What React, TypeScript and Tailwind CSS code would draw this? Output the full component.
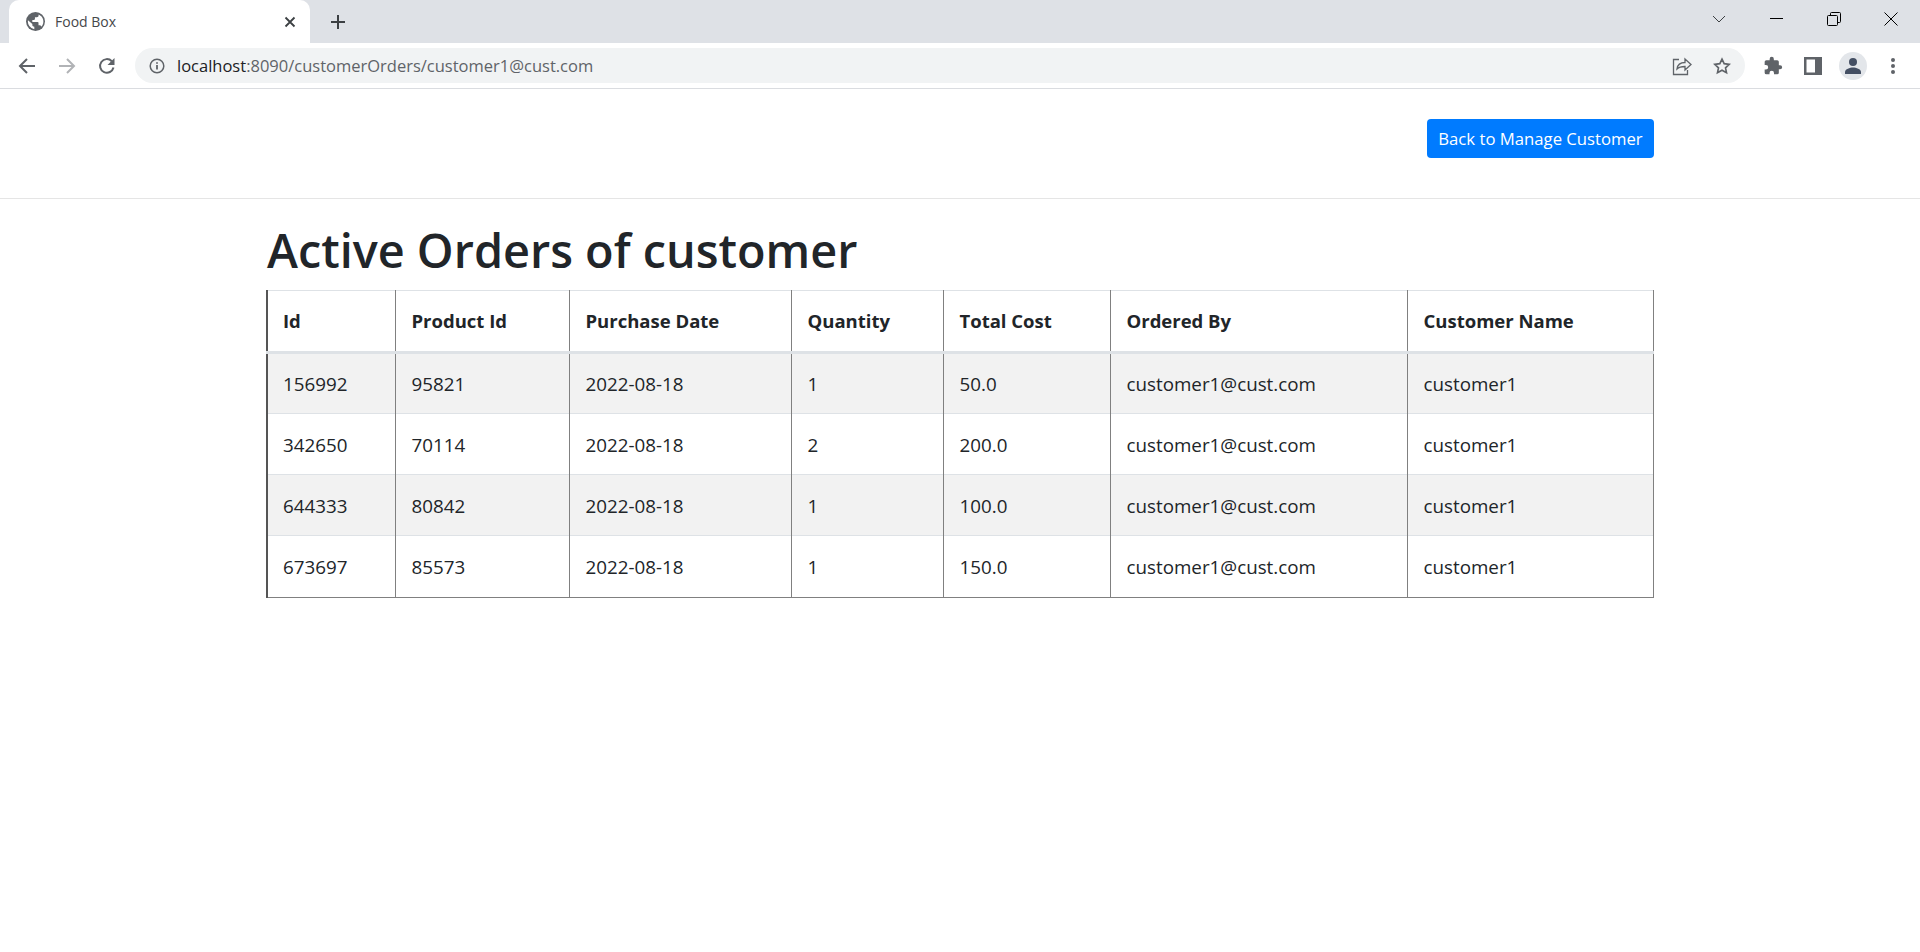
const headers = ["Id", "Product Id", "Purchase Date", "Quantity", "Total Cost", "Ordered By", "Customer Name"];

const orders = [
  ["156992", "95821", "2022-08-18", "1", "50.0", "customer1@cust.com", "customer1"],
  ["342650", "70114", "2022-08-18", "2", "200.0", "customer1@cust.com", "customer1"],
  ["644333", "80842", "2022-08-18", "1", "100.0", "customer1@cust.com", "customer1"],
  ["673697", "85573", "2022-08-18", "1", "150.0", "customer1@cust.com", "customer1"],
];

function TabBar() {
  return (
    <div className="flex h-[43px] items-end bg-[#dee1e6] pl-[9px]">
      <div className="flex h-[43px] w-[301px] items-center rounded-t-[10px] bg-white pl-[17px]">
        <svg width="19" height="19" viewBox="0 0 24 24" className="shrink-0">
          <circle cx="12" cy="12" r="12" fill="#5f6368" />
          <path
            fill="#ffffff"
            d="M2.500 10.500L8 15v1.500c0 1.200 1 2.200 2.500 2.200v3A9.800 9.800 0 0 1 2.500 10.500zM19.500 18.500c-.5-1-1.300-1.700-2.300-1.700h-1.400v-3.200c0-.6-.5-1.100-1.100-1.100H8v-2.500h2.200c.6 0 1.100-.5 1.100-1.100V6.500h2.400c1.200 0 2.200-1 2.200-2.200V3a9.800 9.800 0 0 1 3.600 15.500z"
          />
        </svg>
        <span className="ml-[10px] w-[229px] text-[14px] text-[#45474a]">Food Box</span>
        <svg width="12" height="12" viewBox="0 0 12 12" className="shrink-0" stroke="#3c4043" strokeWidth="1.800">
          <path d="M1.500 1.500l9 9M10.500 1.500l-9 9" />
        </svg>
      </div>
      <div className="flex h-[43px] w-[56px] items-center justify-center">
        <svg width="16" height="16" viewBox="0 0 16 16" stroke="#3c4043" strokeWidth="2">
          <path d="M8 1v14M1 8h14" />
        </svg>
      </div>
      <div className="flex-1" />
      <div className="flex h-[37px] w-[46px] items-center justify-center self-start">
        <svg width="14" height="8" viewBox="0 0 14 8" fill="none" stroke="#3c4043" strokeWidth="1">
          <path d="M1 1l6 6 6-6" />
        </svg>
      </div>
      <div className="w-[6px]" />
      <div className="flex h-[37px] w-[57px] items-center justify-center self-start">
        <div className="h-[1px] w-[13px] bg-black" />
      </div>
      <div className="flex h-[37px] w-[57px] items-center justify-center self-start">
        <svg width="14" height="14" viewBox="0 0 14 14" fill="none" stroke="#000" strokeWidth="1">
          <path d="M3.500 3V1.500a1 1 0 0 1 1-1h8a1 1 0 0 1 1 1v8a1 1 0 0 1-1 1H11" />
          <rect x="0.500" y="3.500" width="10" height="10" rx="1" />
        </svg>
      </div>
      <div className="flex h-[37px] w-[58px] items-center justify-center self-start">
        <svg width="14" height="14" viewBox="0 0 14 14" fill="none" stroke="#000" strokeWidth="1">
          <path d="M.500.500l13 13M13.500.500l-13 13" />
        </svg>
      </div>
    </div>
  );
}

function ToolbarIcon({ children }: { children: React.ReactNode }) {
  return <div className="flex h-[40px] w-[40px] shrink-0 items-center justify-center">{children}</div>;
}

function Toolbar() {
  return (
    <div className="flex h-[46px] items-center border-b border-[#dadce0] bg-white pl-[7px]">
      <ToolbarIcon>
        <svg width="18" height="18" viewBox="0 0 18 18" fill="none" stroke="#5f6368" strokeWidth="2">
          <path d="M17 9H2M9 2L2 9l7 7" />
        </svg>
      </ToolbarIcon>
      <ToolbarIcon>
        <svg width="18" height="18" viewBox="0 0 18 18" fill="none" stroke="#b1b3b6" strokeWidth="2">
          <path d="M1 9h15M9 2l7 7-7 7" />
        </svg>
      </ToolbarIcon>
      <ToolbarIcon>
        <svg width="18" height="18" viewBox="0 0 18 18" fill="none">
          <path d="M15.500 10.500A6.800 6.800 0 1 1 13.800 4.200" stroke="#5f6368" strokeWidth="2" />
          <path d="M16.500 1v7h-7z" fill="#5f6368" />
        </svg>
      </ToolbarIcon>
      <div className="ml-[8px] flex h-[35px] w-[1610px] shrink-0 items-center rounded-full bg-[#f1f3f4] pl-[14px] pr-[3px]">
        <svg width="16" height="16" viewBox="0 0 16 16" fill="none" className="shrink-0">
          <circle cx="8" cy="8" r="6.800" stroke="#5f6368" strokeWidth="1.500" />
          <path d="M8 7v4.500M8 4.200v1.600" stroke="#5f6368" strokeWidth="1.800" />
        </svg>
        <span className="ml-[12px] flex-1 pt-[1px] text-[16.500px] text-[#5f6368]">
          <span className="text-[#202124]">localhost</span>:8090/customerOrders/customer1@cust.com
        </span>
        <ToolbarIcon>
          <svg width="20" height="20" viewBox="0 0 20 20" fill="none" stroke="#5f6368" strokeWidth="1.300">
            <path d="M7 3.500H1.500v15h14V14" />
            <path d="M5 13c.5-4 3.500-6.500 8-6.500V3l6 5.500-6 5.500v-3.500c-3.500 0-6 .5-8 2.500z" />
          </svg>
        </ToolbarIcon>
        <ToolbarIcon>
          <svg width="18" height="18" viewBox="0 0 24 24" fill="none" stroke="#5f6368" strokeWidth="2.200">
            <path d="M12 2.800l2.900 6.100 6.700.9-4.900 4.600 1.300 6.600L12 17.700 6 21l1.300-6.600L2.400 9.800l6.700-.9z" />
          </svg>
        </ToolbarIcon>
      </div>
      <div className="ml-[8px] flex">
        <ToolbarIcon>
          <svg width="20" height="20" viewBox="0 0 24 24" fill="#5f6368">
            <path d="M20.500 11H19V7a2 2 0 0 0-2-2h-4V3.500a2.500 2.500 0 0 0-5 0V5H4a2 2 0 0 0-2 2v3.800h1.500a2.700 2.700 0 0 1 0 5.400H2V20a2 2 0 0 0 2 2h3.800v-1.500a2.700 2.700 0 0 1 5.400 0V22H17a2 2 0 0 0 2-2v-4h1.500a2.500 2.500 0 0 0 0-5z" />
          </svg>
        </ToolbarIcon>
        <ToolbarIcon>
          <svg width="18" height="18" viewBox="0 0 18 18">
            <path fill="#5f6368" fillRule="evenodd" d="M0 0h18v18H0zM2.500 2.500v13H11v-13z" />
          </svg>
        </ToolbarIcon>
        <ToolbarIcon>
          <div className="flex h-[28px] w-[28px] items-center justify-center rounded-full bg-[#e3e6ea]">
            <svg width="18" height="18" viewBox="0 0 18 18" fill="#444f63">
              <circle cx="9" cy="5" r="4" />
              <path d="M1 17v-2c0-3 5-4.500 8-4.500s8 1.500 8 4.500v2z" />
            </svg>
          </div>
        </ToolbarIcon>
        <ToolbarIcon>
          <svg width="6" height="18" viewBox="0 0 6 18" fill="#5f6368">
            <circle cx="3" cy="3" r="2" />
            <circle cx="3" cy="9" r="2" />
            <circle cx="3" cy="15" r="2" />
          </svg>
        </ToolbarIcon>
      </div>
    </div>
  );
}

export default function App() {
  return (
    <div className="min-h-[952px] bg-white text-[#212529]" style={{ fontFamily: "'Open Sans', sans-serif" }}>
      <TabBar />
      <Toolbar />
      <nav className="flex h-[110px] items-start justify-end border-b border-[#e5e5e5] pr-[266px] pt-[30px]">
        <button className="h-[39px] w-[227px] whitespace-nowrap rounded-[4px] bg-[#007bff] text-[16.700px] text-white">
          Back to Manage Customer
        </button>
      </nav>
      <div className="pl-[266px] pt-[21px]">
        <h1 className="h-[70px] pl-[1px] text-[46.800px] leading-[60px] font-semibold">Active Orders of customer</h1>
        <table className="w-[1386px] table-fixed border-collapse text-[18.800px]">
          <colgroup>
            <col className="w-[128px]" />
            <col className="w-[174px]" />
            <col className="w-[222px]" />
            <col className="w-[152px]" />
            <col className="w-[167px]" />
            <col className="w-[297px]" />
            <col className="w-[246px]" />
          </colgroup>
          <thead>
            <tr className="h-[62px] border-t border-b-[3px] border-t-[#dee2e6] border-b-[#dee2e6]">
              {headers.map((h, i) => (
                <th
                  key={h}
                  className={`border-r border-r-[#808080] text-left text-[18.500px] font-bold ${i === 0 ? "border-l-2 border-l-[#555555] pl-[15px]" : "pl-[16px]"}`}
                >
                  {h}
                </th>
              ))}
            </tr>
          </thead>
          <tbody>
            {orders.map((row, r) => (
              <tr
                key={row[0]}
                className={`border-b ${r === 3 ? "h-[62px] border-b-[#808080]" : "h-[61px] border-b-[#dee2e6]"} ${r % 2 === 0 ? "bg-[#f2f2f2]" : "bg-white"}`}
              >
                {row.map((cell, i) => (
                  <td
                    key={i}
                    className={`border-r border-r-[#808080] pt-[2px] ${i === 0 ? "border-l-2 border-l-[#555555] pl-[15px]" : "pl-[16px]"}`}
                  >
                    {cell}
                  </td>
                ))}
              </tr>
            ))}
          </tbody>
        </table>
      </div>
    </div>
  );
}
